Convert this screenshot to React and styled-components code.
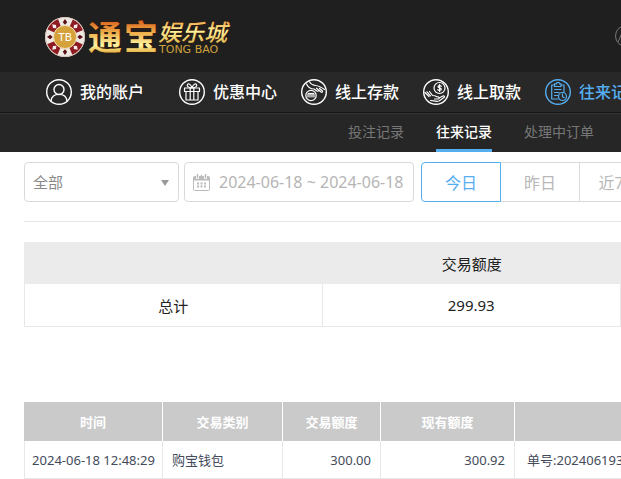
import React from "react"
import styled, { createGlobalStyle, css } from "styled-components"

const blue = "#55aef0"
const line = "#d9d9d9"

const GlobalStyle = createGlobalStyle`
  * {
    box-sizing: border-box;
  }
  body {
    margin: 0;
    overflow-x: hidden;
    background: #fff;
    font-family: "Noto Sans", "Noto Sans CJK SC", sans-serif;
  }
  button, input, select {
    font-family: inherit;
  }
`

const Page = styled.div`
  overflow: hidden;
`

const Header = styled.header`
  display: flex;
  align-items: center;
  height: 72px;
  padding-left: 44px;
  background: #1f1f1f;
  svg {
    flex: none;
  }
`

const HeaderTools = styled.div`
  flex: none;
  display: flex;
  margin-left: 381px;
`

const Nav = styled.nav`
  display: flex;
  align-items: center;
  gap: 24px;
  height: 41px;
  padding-left: 46px;
  background: #282828;
  border-bottom: 1px solid #151515;
`

const NavLink = styled.a`
  flex: none;
  display: flex;
  align-items: center;
  gap: 8px;
  color: ${props => (props.$active ? blue : "#fff")};
  font-size: 16px;
  font-weight: 500;
  line-height: 24px;
  text-decoration: none;
  &:first-child {
    margin-right: 11px;
  }
`

const SubNav = styled.nav`
  display: flex;
  gap: 32px;
  height: 39px;
  padding-left: 348px;
  background: #262626;
  border-top: 1px solid #333;
`

const SubLink = styled.a`
  flex: none;
  height: 38px;
  color: ${props => (props.$active ? "#fff" : "#777")};
  font-size: 14px;
  font-weight: ${props => (props.$active ? 500 : 400)};
  line-height: 36px;
  text-decoration: none;
  ${props =>
    props.$active &&
    css`
      border-bottom: 3px solid ${blue};
    `}
`

const Content = styled.main`
  padding-left: 24px;
`

const Filters = styled.form`
  display: flex;
  padding: 10px 0 19px;
  border-bottom: 1px solid #e5e5e5;
`

const SelectBox = styled.label`
  flex: none;
  position: relative;
  width: 155px;
  margin-right: 5px;
  svg {
    position: absolute;
    top: 18px;
    right: 10px;
    pointer-events: none;
  }
`

const Select = styled.select`
  appearance: none;
  width: 100%;
  height: 40px;
  padding: 0 8px;
  border: 1px solid ${line};
  border-radius: 4px;
  background: #fff;
  color: #888;
  font-size: 15px;
`

const DateBox = styled.label`
  flex: none;
  display: flex;
  align-items: center;
  gap: 9px;
  width: 230px;
  height: 40px;
  margin-right: 7px;
  padding-left: 8px;
  border: 1px solid ${line};
  border-radius: 4px;
`

const DateInput = styled.input`
  flex: 1;
  min-width: 0;
  padding: 0;
  border: 0;
  outline: 0;
  background: none;
  color: #b5b5b5;
  font-size: 16px;
`

const RangeButton = styled.button`
  flex: none;
  width: ${props => (props.$active ? "80px" : "79px")};
  height: 40px;
  padding: 0;
  border: 1px solid ${props => (props.$active ? blue : line)};
  border-left-width: ${props => (props.$active ? "1px" : 0)};
  border-radius: ${props => (props.$active ? "4px 0 0 4px" : 0)};
  background: #fff;
  color: ${props => (props.$active ? blue : "#b8b8b8")};
  font-size: 16px;
`

const Summary = styled.table`
  width: 100%;
  margin-top: 20px;
  border-collapse: separate;
  border-spacing: 0;
  table-layout: fixed;
  color: #222;
  font-size: 15px;
  text-align: center;
  th {
    height: 42px;
    padding: 0;
    background: #ebebeb;
    font-weight: 400;
  }
  td {
    height: 43px;
    padding: 0;
    border-right: 1px solid #e8e8e8;
    border-bottom: 1px solid #e8e8e8;
  }
  td:first-child {
    border-left: 1px solid #e8e8e8;
  }
`

const Records = styled.table`
  width: 891px;
  margin-top: 75px;
  border-collapse: separate;
  border-spacing: 0;
  table-layout: fixed;
  color: #444b5a;
  font-size: 13px;
`

const Head = styled.th`
  width: ${props => props.$width};
  height: 39px;
  padding: 0;
  background: #cacaca;
  border-right: 1px solid #fff;
  color: #fff;
  font-weight: 700;
`

const Cell = styled.td`
  height: 38px;
  padding: 0 ${props => (props.$align === "center" ? "4px" : "9px")};
  border-right: 1px solid #e8e8e8;
  border-bottom: 1px solid #e8e8e8;
  text-align: ${props => props.$align || "left"};
  line-height: 18px;
  white-space: nowrap;
  &:first-child {
    border-left: 1px solid #e8e8e8;
  }
  &:last-child {
    padding-left: 12px;
  }
`

const Logo = () => (
  <svg width="190" height="52" viewBox="0 0 190 52" role="img" aria-label="通宝娱乐城">
    <defs>
      <linearGradient id="gold" x1="0" y1="0" x2="0" y2="1">
        <stop offset="0.2" stopColor="#d9641f" />
        <stop offset="0.45" stopColor="#efb04c" />
        <stop offset="0.7" stopColor="#fff5a0" />
        <stop offset="0.9" stopColor="#d99a25" />
      </linearGradient>
      <linearGradient id="pale" x1="0" y1="0" x2="0" y2="1">
        <stop offset="0.2" stopColor="#e9a64a" />
        <stop offset="0.5" stopColor="#fff39a" />
        <stop offset="1" stopColor="#cfa53a" />
      </linearGradient>
    </defs>
    <circle cx="21" cy="27" r="20" fill="#efe9e4" />
    <circle cx="21" cy="27" r="15.5" fill="none" stroke="#8f1b22" strokeWidth="8"
      strokeDasharray="12.17 12.17" strokeDashoffset="-6" />
    <circle cx="21" cy="27" r="19.5" fill="none" stroke="#d8c4b8" />
    {[0, 45, 90, 135, 180, 225, 270, 315].map((angle, i) => (
      <path key={angle} d="M21 9l2.2 3.2-2.2 2.5-2.2-2.5z"
        fill={i % 2 ? "#f5eeee" : "#571116"} transform={`rotate(${angle} 21 27)`} />
    ))}
    <circle cx="21" cy="27" r="11.5" fill="#d5a13b" stroke="#f2dfbb" />
    <text x="21" y="31" textAnchor="middle" fill="#fff" fontSize="11" fontFamily="Lato, sans-serif">TB</text>
    <g fontFamily="'Noto Sans CJK SC', sans-serif" fontWeight="700" stroke="#3b1b08" strokeWidth="1" paintOrder="stroke">
      <text x="44" y="40" fontSize="34" fill="url(#gold)">通</text>
      <text x="80" y="40" fontSize="34" fill="url(#gold)">宝</text>
      <text x="114" y="31" fontSize="23" fontStyle="italic" fontWeight="500" fill="url(#pale)">娱乐城</text>
    </g>
    <text x="115" y="43" fontSize="11" fill="#d0a13c" fontFamily="'DejaVu Sans', sans-serif">TONG BAO</text>
  </svg>
)

const RoundIcon = ({ children }) => (
  <svg width="26" height="26" viewBox="0 0 26 26" fill="none" stroke="currentColor"
    strokeWidth="1.2" strokeLinecap="round" strokeLinejoin="round">
    <circle cx="13" cy="13" r="12.3" strokeWidth="1.4" />
    {children}
  </svg>
)

const icons = {
  user: (
    <>
      <circle cx="13" cy="10.5" r="5" strokeWidth="1.4" />
      <path d="M5 22c.5-4.3 3.8-6.6 8-6.6s7.5 2.3 8 6.6" strokeWidth="1.4" />
    </>
  ),
  gift: (
    <>
      <path d="M5.5 9h15v3.5h-15zM7 12.5h12V21H7zM11.2 9v12M14.800 9v12" />
      <path d="M13 9C9 8.500 7.500 7 8.500 5.500S12 5.500 13 9C14 5.500 16.500 4 17.500 5.500S17 8.500 13 9" />
    </>
  ),
  deposit: (
    <>
      <circle cx="10" cy="16.500" r="5.200" />
      <path d="M7 18v-2.500c0-1.500 2-1.500 2 0V18v-2.500c0-1.500 2-1.500 2 0V18v-2.500c0-1.500 2-1.500 2 0V18" />
      <path d="M8.500 2.800c1.500 2.500 3 3.500 6 3.700 3.500.3 5.500 1.500 9 4M5.500 5c2 4 4 5 7.500 5l3 2c1.500.8 2-.7 1-1.500l-1.500-1.300M17 10.500l3 2.500c1.400.8 2-.6 1-1.500l-2.500-2" />
    </>
  ),
  withdraw: (
    <>
      <circle cx="16.500" cy="9" r="5.500" />
      <path d="M18.300 7.300c-.5-1-3.300-1-3.300.4s3.300 1 3.300 2.500-3 1.600-3.500.3M16.600 5.700v6.900" />
      <path d="M2 13.500l4 4M4 12.800l3.500 4M6.500 12.500l3 4c1.500 0 3 .2 4 1.200l2 .3c1.500.8.500 2-.5 2h-3.500M16 19l4-2c1.500-.5 2 1 1 1.600L16 22c-3.500 1-5.500-.5-8.500-.5" />
    </>
  ),
  record: (
    <>
      <path d="M9.500 6H6.700v14H13M16 6h3v7M9.500 4.800h1.800c.3-2 3.100-2 3.400 0H16v2.700H9.500z" />
      <path d="M9.500 10.500h6.500M9.500 13.500h4.500M9.500 16.500h3" />
      <circle cx="17.500" cy="17.500" r="4" />
      <path d="M17.500 15v2.700l1.700 1" />
    </>
  ),
}

const links = [
  ["user", "我的账户"],
  ["gift", "优惠中心"],
  ["deposit", "线上存款"],
  ["withdraw", "线上取款"],
  ["record", "往来记录"],
]

const CalendarIcon = () => (
  <svg width="17" height="17" viewBox="0 0 17 17" fill="none" stroke="#bbb">
    <rect x=".5" y="2.5" width="16" height="14" rx="1" />
    <path d="M1 3h15v3H1z" fill="#bbb" />
    <path d="M4.5 0v5M12.5 0v5" stroke="#fff" strokeWidth="3" />
    <path d="M4.5 0v4.500M12.5 0v4.500M8.5 1v3" strokeWidth="1.5" />
    <path d="M4 9.500h9M4 12.500h9" strokeWidth="2" strokeDasharray="2 1.500" />
  </svg>
)

const App = () => (
  <Page>
    <GlobalStyle />
    <Header>
      <Logo />
      <HeaderTools>
        <svg width="22" height="22" viewBox="0 0 22 22" fill="none" stroke="#777">
          <circle cx="11" cy="11" r="10.5" />
          <path d="M3 17L7 8l4-3" />
        </svg>
      </HeaderTools>
    </Header>
    <Nav>
      {links.map(([icon, text]) => (
        <NavLink key={icon} href={`#${icon}`} $active={icon === "record"}>
          <RoundIcon>{icons[icon]}</RoundIcon>
          {text}
        </NavLink>
      ))}
    </Nav>
    <SubNav>
      <SubLink href="#bets">投注记录</SubLink>
      <SubLink href="#record" $active>往来记录</SubLink>
      <SubLink href="#orders">处理中订单</SubLink>
    </SubNav>
    <Content>
      <Filters onSubmit={e => e.preventDefault()}>
        <SelectBox>
          <Select aria-label="交易类别">
            <option>全部</option>
          </Select>
          <svg width="8" height="6" viewBox="0 0 8 6">
            <path d="M0 0h8L4 6z" fill="#999" />
          </svg>
        </SelectBox>
        <DateBox>
          <CalendarIcon />
          <DateInput aria-label="时间" readOnly value="2024-06-18 ~ 2024-06-18" />
        </DateBox>
        <RangeButton type="button" $active>今日</RangeButton>
        <RangeButton type="button">昨日</RangeButton>
        <RangeButton type="button">近7日</RangeButton>
      </Filters>
      <Summary>
        <thead>
          <tr>
            <th />
            <th>交易额度</th>
          </tr>
        </thead>
        <tbody>
          <tr>
            <td>总计</td>
            <td>299.93</td>
          </tr>
        </tbody>
      </Summary>
      <Records>
        <thead>
          <tr>
            <Head $width="139px">时间</Head>
            <Head $width="120px">交易类别</Head>
            <Head $width="98px">交易额度</Head>
            <Head $width="134px">现有额度</Head>
            <Head $width="400px" />
          </tr>
        </thead>
        <tbody>
          <tr>
            <Cell $align="center">2024-06-18 12:48:29</Cell>
            <Cell>购宝钱包</Cell>
            <Cell $align="right">300.00</Cell>
            <Cell $align="right">300.92</Cell>
            <Cell>单号:202406193</Cell>
          </tr>
        </tbody>
      </Records>
    </Content>
  </Page>
)

export default App
